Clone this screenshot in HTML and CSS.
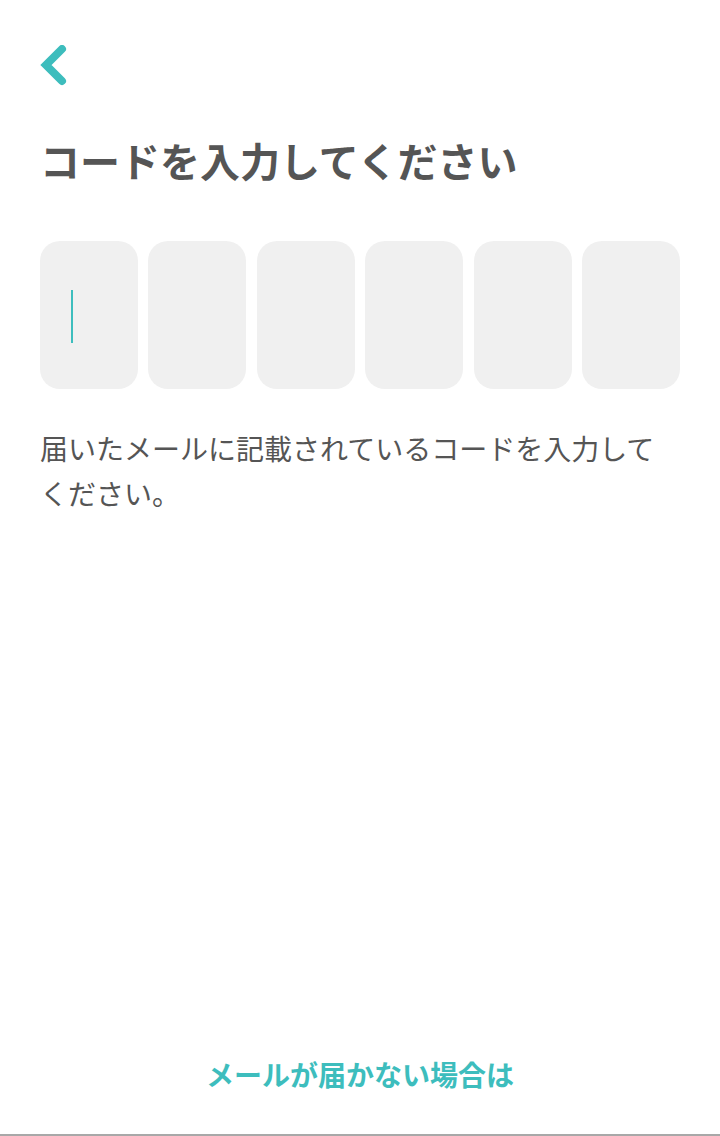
FILE: index.html
```html
<!DOCTYPE html>
<html lang="ja">
<head>
<meta charset="utf-8">
<link rel="stylesheet" href="styles.css">
</head>
<body>
<div class="screen">
  <header class="topbar">
    <button class="back" aria-label="戻る">
      <svg width="30" height="44" viewBox="0 0 30 44"><path d="M22 4 L6 20 L22 36" fill="none" stroke="#3dbdbd" stroke-width="8" stroke-linecap="round" stroke-linejoin="miter"/></svg>
    </button>
  </header>
  <main class="content">
    <h1 class="title">コードを入力してください</h1>
    <div class="code">
      <div class="cell active"><span class="caret"></span></div>
      <div class="cell"></div>
      <div class="cell"></div>
      <div class="cell"></div>
      <div class="cell"></div>
      <div class="cell"></div>
    </div>
    <p class="desc">届いたメールに記載されているコードを入力してください。</p>
  </main>
  <footer class="footer">
    <a class="help">メールが届かない場合は</a>
  </footer>
</div>
</body>
</html>
```
FILE: styles.css
```css
* { box-sizing: border-box; }
html, body { margin: 0; padding: 0; background: #fff; }
body {
  font-family: "Noto Sans CJK JP", "Noto Sans", sans-serif;
  color: #555;
}
.screen {
  height: 1136px;
  display: flex;
  flex-direction: column;
  border-bottom: 2px solid #a8a8a8;
}
.topbar {
  padding: 45px 0 0 40px;
  height: 132px;
}
.back {
  border: 0;
  background: none;
  padding: 0;
  display: block;
}
.back svg { display: block; }
.content {
  flex: 1;
  padding: 0 40px;
}
.title {
  margin: 0;
  font-size: 40px;
  line-height: 56px;
  font-weight: 700;
  color: #555;
  letter-spacing: 0;
}
.code {
  margin-top: 53px;
  display: grid;
  grid-template-columns: repeat(6, 1fr);
  column-gap: 10.4px;
}
.cell {
  height: 148px;
  background: #f0f0f0;
  border-radius: 20px;
  position: relative;
  display: flex;
  align-items: center;
  padding-left: 31px;
}
.caret {
  display: block;
  width: 2px;
  height: 53px;
  background: #3dbdbd;
  margin-top: 2px;
}
.desc {
  margin: 37px 0 0;
  font-size: 28px;
  line-height: 45px;
  color: #555;
  padding-right: 10px;
}
.footer {
  display: flex;
  justify-content: center;
  padding-bottom: 40px;
}
.help {
  font-size: 28px;
  line-height: 40px;
  font-weight: 700;
  color: #3dbdbd;
}
```
